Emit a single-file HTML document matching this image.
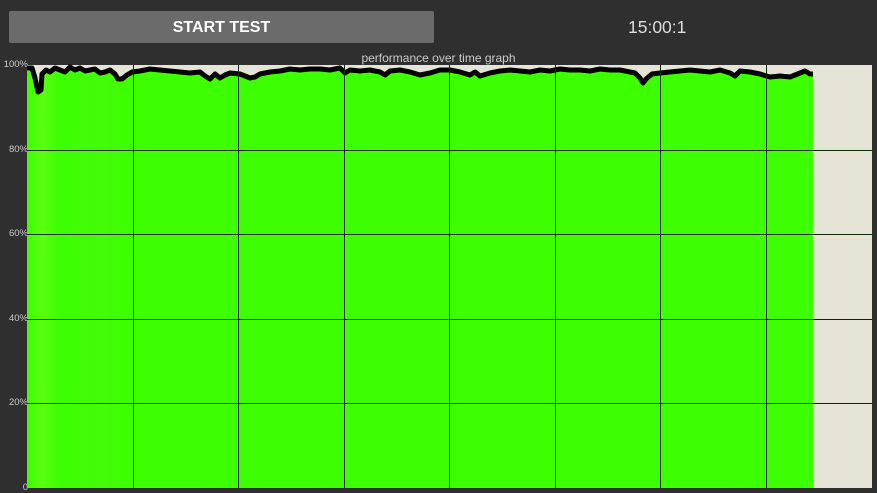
<!DOCTYPE html>
<html><head><meta charset="utf-8"><style>
body{margin:0;width:877px;height:493px;background:#2f2f2f;overflow:hidden;font-family:"Liberation Sans",sans-serif;position:relative}
.btn{position:absolute;left:9px;top:11px;width:425px;height:32px;background:#6b6b6b;border-radius:2px;color:#fff;font-size:16px;font-weight:bold;line-height:33px;text-align:center}
.t{position:absolute;left:628px;top:17px;color:#ddd;font-size:17.5px}
.g{position:absolute;left:0;top:51px;width:877px;text-align:center;color:#ccc;font-size:12px}
.y{position:absolute;left:0;width:28px;text-align:right;color:#ccc;font-size:9.5px}
</style></head><body>
<div class="btn">START TEST</div>
<div class="t">15:00:1</div>
<div class="g">performance over time graph</div>
<div class="y" style="top:59px">100%</div>
<div class="y" style="top:144px">80%</div>
<div class="y" style="top:228px">60%</div>
<div class="y" style="top:313px">40%</div>
<div class="y" style="top:397px">20%</div>
<div class="y" style="top:482px">0</div>
<svg width="877" height="493" style="position:absolute;left:0;top:0">
<defs><linearGradient id="s" x1="0" x2="1">
<stop offset="0" stop-color="#3cff00"/><stop offset="0.02" stop-color="#5aff10"/><stop offset="0.04" stop-color="#3cff00"/><stop offset="0.1" stop-color="#44fb08"/><stop offset="0.13" stop-color="#3cff00"/></linearGradient></defs>
<rect x="27" y="65" width="845" height="423" fill="#e6e4d6"/>
<polygon fill="url(#s)" points="27,488 27,68 32,68 35,78 38,92 41,90 42,74 46,70 50,72 55,68 60,70 65,72 70,67 75,70 80,68 85,71 90,70 95,69 100,73 105,72 110,70 115,74 118,79 122,79 127,75 132,72 140,71 150,69 160,70 170,71 180,72 190,73 200,72 205,76 210,79 215,74 220,78 225,75 230,73 240,74 250,78 255,77 260,74 270,72 280,71 290,69 300,70 310,69 320,69 330,70 340,68 345,73 350,70 360,71 370,70 380,72 385,75 390,71 400,70 410,72 420,75 430,73 440,70 450,70 460,72 470,75 475,72 480,76 490,73 500,71 510,70 520,71 530,72 540,70 550,71 560,69 570,70 580,70 590,71 600,69 610,70 620,70 630,72 635,73 640,78 643,83 646,79 652,74 660,73 670,72 680,71 690,70 700,71 710,72 720,70 730,73 735,76 740,71 750,72 760,74 770,77 780,76 790,77 800,73 805,71 810,74 813,74 813,488"/>
<polyline fill="none" stroke="#000" stroke-width="5" stroke-linejoin="round" points="27,68 32,68 35,78 38,92 41,90 42,74 46,70 50,72 55,68 60,70 65,72 70,67 75,70 80,68 85,71 90,70 95,69 100,73 105,72 110,70 115,74 118,79 122,79 127,75 132,72 140,71 150,69 160,70 170,71 180,72 190,73 200,72 205,76 210,79 215,74 220,78 225,75 230,73 240,74 250,78 255,77 260,74 270,72 280,71 290,69 300,70 310,69 320,69 330,70 340,68 345,73 350,70 360,71 370,70 380,72 385,75 390,71 400,70 410,72 420,75 430,73 440,70 450,70 460,72 470,75 475,72 480,76 490,73 500,71 510,70 520,71 530,72 540,70 550,71 560,69 570,70 580,70 590,71 600,69 610,70 620,70 630,72 635,73 640,78 643,83 646,79 652,74 660,73 670,72 680,71 690,70 700,71 710,72 720,70 730,73 735,76 740,71 750,72 760,74 770,77 780,76 790,77 800,73 805,71 810,74 813,74"/>
<g stroke="#0d2a05" stroke-width="1">
<line x1="133.5" y1="65" x2="133.5" y2="488"/><line x1="238.5" y1="65" x2="238.5" y2="488"/><line x1="344.5" y1="65" x2="344.5" y2="488"/><line x1="449.5" y1="65" x2="449.5" y2="488"/><line x1="555.5" y1="65" x2="555.5" y2="488"/><line x1="660.5" y1="65" x2="660.5" y2="488"/><line x1="766.5" y1="65" x2="766.5" y2="488"/>
<line x1="27" y1="150.5" x2="872" y2="150.5"/><line x1="27" y1="234.5" x2="872" y2="234.5"/><line x1="27" y1="319.5" x2="872" y2="319.5"/><line x1="27" y1="403.5" x2="872" y2="403.5"/>
</g>
</svg>
</body></html>
